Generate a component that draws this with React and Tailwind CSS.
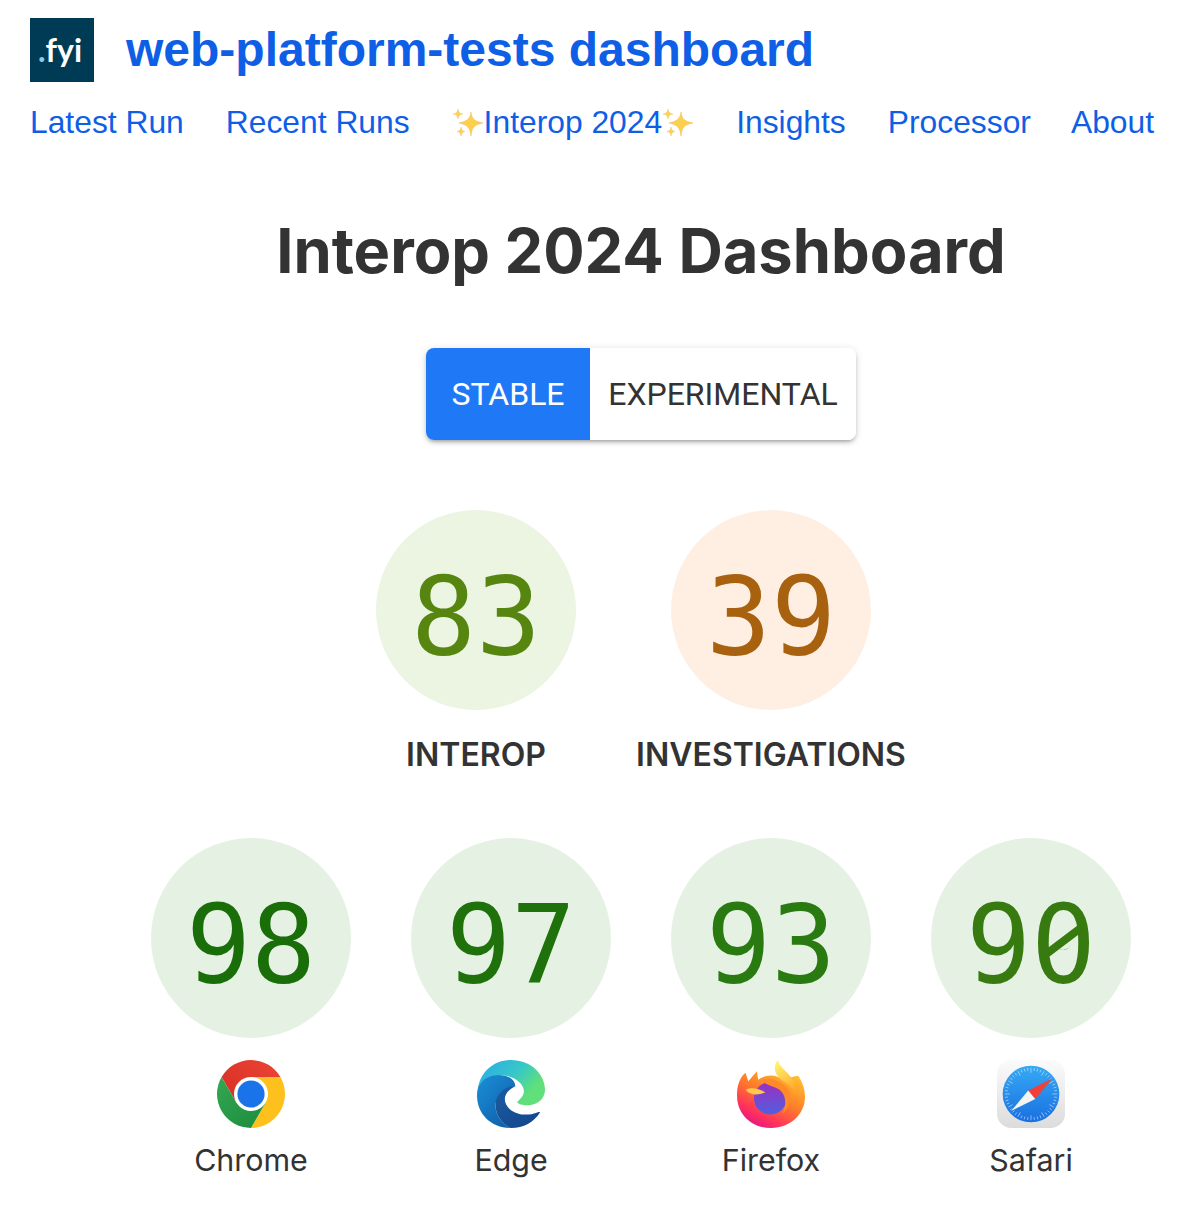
import { useId } from 'react'

const NAV = ['Latest Run', 'Recent Runs', 'Interop 2024', 'Insights', 'Processor', 'About']

function Sparkles() {
  return (
    <svg width="32" height="32" viewBox="0 0 32 32" className="shrink-0">
      <path d="M19 6 C20 13 22 15 31 17 C22 19 20 21 19 30 C18 21 15 19 7 17 C15 15 18 13 19 6 Z" fill="#fbd04b" stroke="#f5b95a" strokeWidth="0.5" />
      <path d="M6 3 C6.5 6 7.5 7.5 11 8 C7.5 8.5 6.500 10 6 13 C5.500 10 4.500 8.500 1 8 C4.500 7.500 5.500 6 6 3 Z" fill="#fcd34d" stroke="#f5b95a" strokeWidth="0.4" />
      <path d="M9 21 C9.500 24 10.500 25 13 25.500 C10.500 26 9.500 27 9 30 C8.500 27 7.500 26 5 25.500 C7.500 25 8.500 24 9 21 Z" fill="#fcd34d" stroke="#f5b95a" strokeWidth="0.4" />
    </svg>
  )
}

function ChromeIcon() {
  const id = useId()
  return (
    <svg width="68" height="68" viewBox="0 0 48 48">
      <defs>
        <linearGradient id={id + 'r'} x1="0" y1="0.8" x2="1" y2="0.2">
          <stop offset="0" stopColor="#d93025" />
          <stop offset="1" stopColor="#ea4335" />
        </linearGradient>
        <linearGradient id={id + 'g'} x1="0" y1="0" x2="0.8" y2="1">
          <stop offset="0" stopColor="#34a853" />
          <stop offset="1" stopColor="#1e8e3e" />
        </linearGradient>
      </defs>
      <path d="M3.220 12 A24 24 0 0 1 44.780 12 L24 12 L13.610 30 Z" fill={'url(#' + id + 'r)'} />
      <path d="M44.780 12 A24 24 0 0 1 24 48 L34.390 30 L24 12 Z" fill="#fdc01c" />
      <path d="M24 48 A24 24 0 0 1 3.220 12 L13.610 30 L34.390 30 Z" fill={'url(#' + id + 'g)'} />
      <circle cx="24" cy="24" r="12" fill="#fff" />
      <circle cx="24" cy="24" r="9.600" fill="#1a73e8" />
    </svg>
  )
}

function EdgeIcon() {
  const id = useId()
  return (
    <svg width="68" height="68" viewBox="0 0 48 48">
      <defs>
        <linearGradient id={id + 'a'} x1="0.2" y1="0.2" x2="0.85" y2="0.6">
          <stop offset="0" stopColor="#2fb6dc" />
          <stop offset="0.5" stopColor="#38c9c4" />
          <stop offset="1" stopColor="#5fe07a" />
        </linearGradient>
        <linearGradient id={id + 'b'} x1="0.1" y1="0.1" x2="0.8" y2="0.9">
          <stop offset="0" stopColor="#1a8ad4" />
          <stop offset="1" stopColor="#0f62ab" />
        </linearGradient>
        <linearGradient id={id + 'c'} x1="0.1" y1="0.1" x2="0.8" y2="0.9">
          <stop offset="0" stopColor="#1a5aa0" />
          <stop offset="1" stopColor="#14488c" />
        </linearGradient>
      </defs>
      <path d="M0.800 19 C3 8 12 0 24 0 C38 0 48 10 48 21 C48 28 42 32 35.500 32 C32 32 29 31 28.500 30 C28.300 29.500 29 29 30 28 C32 26 33.500 24 33 21 C32 15 24 10.500 16 10.800 C9 11 3 14 0.800 19 Z" fill={'url(#' + id + 'a)'} />
      <path d="M0.800 19 C4 12 12 9.500 19 11 C24 12 27 15 27 18.500 C20 20 15 25 13 31 C12.500 38 18 46 24 48 C10 48 0 38 0 25 C0 23 0.200 21 0.800 19 Z" fill={'url(#' + id + 'b)'} />
      <path d="M27 18.500 C20 18 13.500 24 13 31 C12.500 38 18 46 24 48 C33 48 40 44 44.500 37 C44 36.600 43 36.800 42 37.200 C36 39.500 28 39 23 34.500 C18 30 18 23 27 18.500 Z" fill={'url(#' + id + 'c)'} />
    </svg>
  )
}

function FirefoxIcon() {
  const id = useId()
  return (
    <svg width="68" height="68" viewBox="0 0 48 48">
      <defs>
        <linearGradient id={id + 'a'} x1="0.8" y1="0.05" x2="0.2" y2="0.95">
          <stop offset="0" stopColor="#ffbd2e" />
          <stop offset="0.45" stopColor="#ff7a2a" />
          <stop offset="0.8" stopColor="#ff2f5e" />
          <stop offset="1" stopColor="#e31587" />
        </linearGradient>
        <linearGradient id={id + 'b'} x1="0.5" y1="0" x2="0.5" y2="1">
          <stop offset="0" stopColor="#a02ec0" />
          <stop offset="1" stopColor="#4f5fe0" />
        </linearGradient>
        <linearGradient id={id + 'c'} x1="0.3" y1="0" x2="0.7" y2="1">
          <stop offset="0" stopColor="#fff36b" />
          <stop offset="1" stopColor="#ff9a1f" />
        </linearGradient>
      </defs>
      <path d="M6 9 L8 15 L14 8 L15 14 C19 11 24 10 29 12 C36 15 40 10 43.500 11.500 C46.500 16 48 21 48 26 C48 38 38 48 24 48 C10 48 0 38 0 25 C0 18 2 12 6 9 Z" fill={'url(#' + id + 'a)'} />
      <path d="M29 0 C30 5 34 7 38 12 C42 17 43 23 42 28 C41 22 38 18 33 15 C28 12 24 6 29 0 Z" fill={'url(#' + id + 'c)'} />
      <circle cx="23.500" cy="27" r="11.500" fill={'url(#' + id + 'b)'} />
      <path d="M6 21 C11 19 15 20 20 23 C15 25 9 25 6 21 Z" fill="#ffc94d" />
      <path d="M17 14 C24 12 33 15 37 22 C39 27 37 34 32 38 C35 32 35 25 30 21 C26 18 20 18 17 14 Z" fill="#ff8a2a" />
    </svg>
  )
}

function SafariIcon() {
  const id = useId()
  const ticks = []
  for (let i = 0; i < 48; i++) {
    ticks.push(<line key={i} x1="24" y1="5.500" x2="24" y2={i % 4 === 0 ? 9 : 7.500} stroke="#d6ecfb" strokeWidth="0.400" transform={`rotate(${i * 7.5} 24 24)`} />)
  }
  return (
    <svg width="68" height="68" viewBox="0 0 48 48">
      <defs>
        <linearGradient id={id + 'a'} x1="0.5" y1="0" x2="0.5" y2="1">
          <stop offset="0" stopColor="#fbfbfb" />
          <stop offset="1" stopColor="#dcdcdc" />
        </linearGradient>
        <linearGradient id={id + 'b'} x1="0.5" y1="0" x2="0.5" y2="1">
          <stop offset="0" stopColor="#35aaf5" />
          <stop offset="1" stopColor="#1a6fe0" />
        </linearGradient>
      </defs>
      <rect x="0" y="0" width="48" height="48" rx="10" fill={'url(#' + id + 'a)'} />
      <circle cx="24" cy="24" r="20" fill={'url(#' + id + 'b)'} />
      {ticks}
      <path d="M39 13 L22 21.500 L27 27.500 Z" fill="#f0403a" />
      <path d="M10 36 L22 21.500 L27 27.500 Z" fill="#f4f4f4" />
    </svg>
  )
}

// the mono font here has a dotted zero, the reference a slashed one
function SlashedZero() {
  return (
    <span className="relative inline-block">
      0
      <span className="absolute left-[23px] top-[41px] h-[18px] w-[18px] rounded-full bg-[#e5f2e3]" />
      <span className="absolute left-[12px] top-[46px] h-[8px] w-[41px] -rotate-[37deg] bg-current" />
    </span>
  )
}

function Score({ value, bg, color }) {
  return (
    <div className={`flex h-[200px] w-[200px] items-center justify-center rounded-full pt-[14px] ${bg}`}>
      <span className={`font-['DejaVu_Sans_Mono',monospace] text-[108px] leading-none ${color}`}>{value}</span>
    </div>
  )
}

function Browser({ value, color, name, icon }) {
  return (
    <div className="flex w-[200px] flex-col items-center">
      <Score value={value} bg="bg-[#e5f2e3]" color={color} />
      <div className="mt-[22px] h-[68px]">{icon}</div>
      <div className="mt-[12px] font-['Inter',sans-serif] text-[30.4px] leading-[40px] text-[#333]">{name}</div>
    </div>
  )
}

export default function App() {
  return (
    <div className="h-[1226px] overflow-hidden bg-white px-[30px] pt-[18px] font-['Liberation_Sans',Arial,sans-serif]">
      <header className="flex items-center gap-[32px]">
        <div className="flex h-[64px] w-[64px] items-center justify-center bg-[#003b55] pr-[4px] font-['Lato',sans-serif] text-[32px] font-bold leading-none text-white">
          <span className="text-[#7fd0ea]">.</span>fyi
        </div>
        <h1 className="text-[48px] font-bold leading-[64px] text-[#0f5fe6]">web-platform-tests dashboard</h1>
      </header>

      <nav className="mt-[16px] flex items-center gap-[42px] whitespace-nowrap text-[31.8px] leading-[48px] text-[#0f5fe6]">
        {NAV.map((label) =>
          label === 'Interop 2024' ? (
            <a key={label} className="flex items-center">
              <Sparkles />
              {label}
              <Sparkles />
            </a>
          ) : (
            <a key={label} className={label === 'About' ? '-ml-[2px]' : ''}>{label}</a>
          )
        )}
      </nav>

      <main className="ml-[78px] flex flex-col items-center">
        <h2 className="mt-[65px] whitespace-nowrap font-['Inter',sans-serif] text-[61.4px] font-bold leading-[80px] text-[#333]">Interop 2024 Dashboard</h2>

        <div className="mt-[57px] flex h-[92px] overflow-hidden rounded-[8px] font-['Roboto',sans-serif] text-[32px] shadow-[0_3px_3px_-2px_rgba(0,0,0,0.2),0_3px_4px_0_rgba(0,0,0,0.14),0_1px_8px_0_rgba(0,0,0,0.12)]">
          <button className="w-[164px] bg-[#1f78f5] text-white">STABLE</button>
          <button className="w-[266px] bg-white text-[#333]">EXPERIMENTAL</button>
        </div>

        <div className="mt-[70px] flex gap-[60px]">
          <div className="flex w-[200px] flex-col items-center">
            <Score value="83" bg="bg-[#ebf5e2]" color="text-[#568510]" />
            <div className="mt-[25px] font-['Inter',sans-serif] text-[32px] font-semibold leading-[40px] text-[#333]">INTEROP</div>
          </div>
          <div className="flex w-[270px] flex-col items-center">
            <Score value="39" bg="bg-[#ffefe3]" color="text-[#a8610f]" />
            <div className="mt-[25px] whitespace-nowrap font-['Inter',sans-serif] text-[32px] font-semibold leading-[40px] text-[#333]">INVESTIGATIONS</div>
          </div>
        </div>

        <div className="mt-[63px] flex gap-[60px]">
          <Browser value="98" color="text-[#1a6e0a]" name="Chrome" icon={<ChromeIcon />} />
          <Browser value="97" color="text-[#1f720b]" name="Edge" icon={<EdgeIcon />} />
          <Browser value="93" color="text-[#2a7a12]" name="Firefox" icon={<FirefoxIcon />} />
          <Browser value={<>9<SlashedZero /></>} color="text-[#367a10]" name="Safari" icon={<SafariIcon />} />
        </div>
      </main>
    </div>
  )
}
